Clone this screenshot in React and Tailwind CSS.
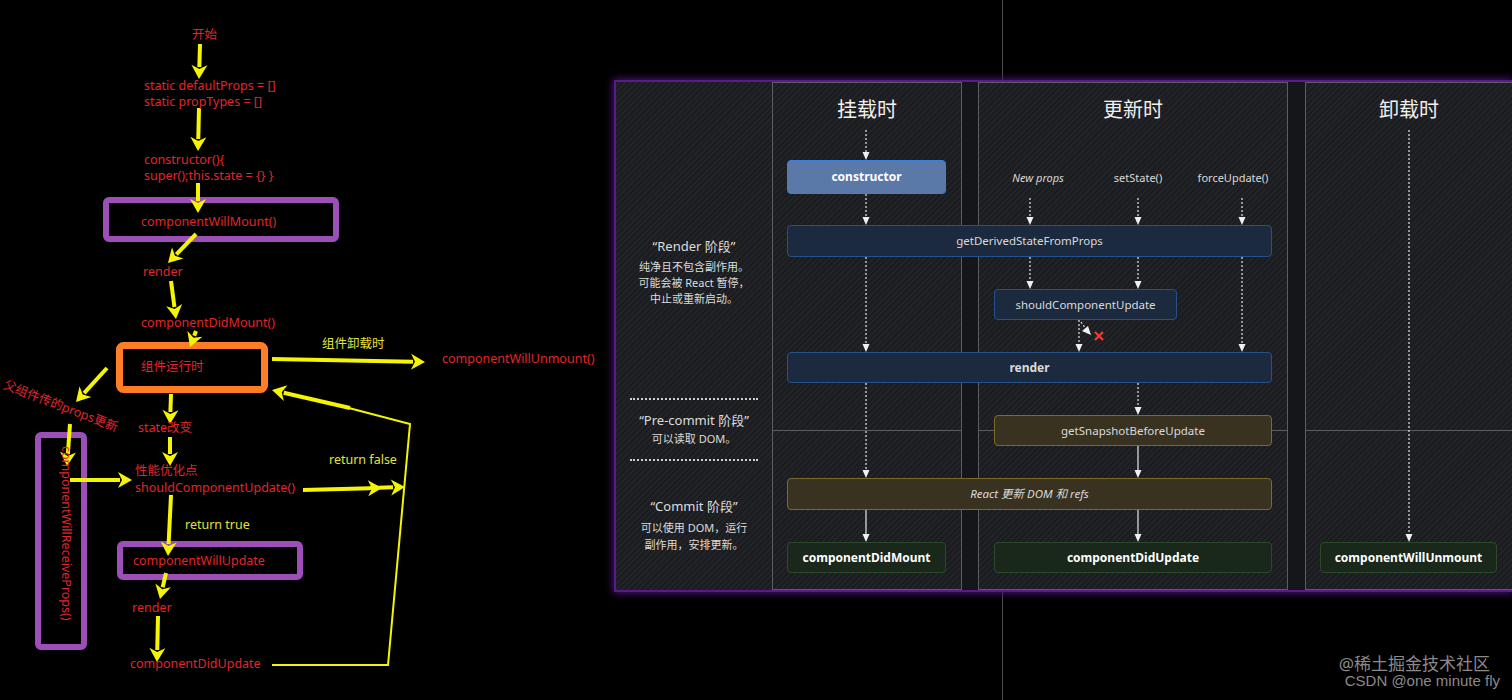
import React from "react";

const Y = "#f5f500";

function Arrow({ x1, y1, x2, y2, w = 4, h = 14, hw = 8, c = Y }) {
  const dx = x2 - x1, dy = y2 - y1;
  const L = Math.hypot(dx, dy);
  const ux = dx / L, uy = dy / L;
  const bx = x2 - ux * h, by = y2 - uy * h;
  const px = -uy, py = ux;
  return (
    <g>
      <line x1={x1} y1={y1} x2={bx + ux * 2} y2={by + uy * 2} stroke={c} strokeWidth={w} />
      <polygon
        points={`${x2},${y2} ${bx + px * hw},${by + py * hw} ${bx + ux * 4},${by + uy * 4} ${bx - px * hw},${by - py * hw}`}
        fill={c}
      />
    </g>
  );
}

const leftTexts = [
  { x: 192, y: 35, t: "开始" },
  { x: 144, y: 86, t: "static defaultProps = []" },
  { x: 144, y: 102, t: "static propTypes = []" },
  { x: 144, y: 160, t: "constructor(){" },
  { x: 144, y: 176, t: "super();this.state = {} }" },
  { x: 141, y: 222, t: "componentWillMount()" },
  { x: 143, y: 272, t: "render" },
  { x: 141, y: 323, t: "componentDidMount()" },
  { x: 141, y: 367, t: "组件运行时" },
  { x: 322, y: 344, t: "组件卸载时", y2: true },
  { x: 442, y: 359, t: "componentWillUnmount()" },
  { x: 138, y: 428, t: "state改变" },
  { x: 135, y: 471, t: "性能优化点" },
  { x: 135, y: 488, t: "shouldComponentUpdate()" },
  { x: 329, y: 460, t: "return false", y2: true },
  { x: 185, y: 525, t: "return true", y2: true },
  { x: 133, y: 561, t: "componentWillUpdate" },
  { x: 132, y: 608, t: "render" },
  { x: 130, y: 664, t: "componentDidUpdate" },
];

const arrows = [
  [200, 44, 199, 79],
  [199, 108, 198, 151],
  [198, 183, 198, 213],
  [196, 234, 168, 263],
  [171, 281, 176, 319],
  [196, 331, 190, 347],
  [272, 359, 425, 362],
  [107, 368, 76, 402],
  [171, 394, 170, 424],
  [170, 437, 170, 466],
  [70, 424, 67, 466],
  [70, 480, 132, 480],
  [303, 490, 382, 488],
  [370, 488, 405, 487],
  [171, 495, 168, 556],
  [166, 573, 160, 599],
  [158, 616, 157, 662],
  [350, 408, 272, 390],
];

function LeftDiagram() {
  return (
    <div className="relative w-[614px] h-[700px] shrink-0">
      <svg className="absolute inset-0" width="614" height="700">
        <rect x="106" y="200" width="230" height="39" rx="3" fill="none" stroke="#9d4fb8" strokeWidth="6" />
        <rect x="119.5" y="345.5" width="145" height="44" rx="4" fill="none" stroke="#ff7d24" strokeWidth="7" />
        <rect x="38" y="435" width="46" height="212" rx="3" fill="none" stroke="#9d4fb8" strokeWidth="6" />
        <rect x="120" y="544" width="180" height="33" rx="3" fill="none" stroke="#9d4fb8" strokeWidth="6" />
        <polyline points="272,665 388,665 410,424 345,407" fill="none" stroke={Y} strokeWidth="2" />
        {arrows.map((a, i) => (
          <Arrow key={i} x1={a[0]} y1={a[1]} x2={a[2]} y2={a[3]} />
        ))}
      </svg>
      {leftTexts.map((t, i) => (
        <span
          key={i}
          className={
            "absolute whitespace-nowrap text-[12.5px] leading-[16px] " +
            (t.y2 ? "text-[#e2e23c]" : "text-[#e0262b]")
          }
          style={{ left: t.x, top: t.y - 8 }}
        >
          {t.t}
        </span>
      ))}
      <span className="absolute left-[7px] top-[377px] whitespace-nowrap text-[12.5px] leading-[16px] text-[#e0262b] origin-top-left rotate-[21deg]">
        父组件传的props更新
      </span>
      <span className="absolute left-[58px] top-[446px] whitespace-nowrap text-[12.5px] leading-[16px] text-[#e0262b] [writing-mode:vertical-rl]">
        componentWillReceiveProps()
      </span>
    </div>
  );
}

function Box({ x, y, w, h, kind, bold, italic, children }) {
  const k = {
    mount: "bg-[#5a78a8] border-[#3b82e0] text-white",
    blue: "bg-[#1b2a3e] border-[#27518a] text-[#dadada]",
    olive: "bg-[#393220] border-[#7a6a2c] text-[#dadada]",
    green: "bg-[#1a271b] border-[#2b4a29] text-white",
  }[kind];
  return (
    <div
      className={
        "absolute flex items-center justify-center rounded-[4px] border " +
        k +
        (bold ? " font-bold text-[12px]" : " text-[11.5px]") +
        (italic ? " italic" : "")
      }
      style={{ left: x, top: y, width: w, height: h }}
    >
      {children}
    </div>
  );
}

function Panel() {
  const dashed = [
    [250, 48, 78],
    [250, 112, 143],
    [250, 175, 270],
    [250, 301, 396],
    [414, 116, 143],
    [414, 175, 207],
    [522, 116, 143],
    [522, 175, 207],
    [626, 116, 143],
    [626, 175, 270],
    [463, 238, 270],
    [522, 301, 333],
    [793, 48, 460],
  ];
  const solid = [
    [250, 428, 460],
    [522, 364, 396],
    [522, 428, 460],
  ];
  return (
    <div className="relative z-10 mt-[80px] h-[512px] flex-1 border-2 border-r-0 border-[#5a1a8c] shadow-[0_0_8px_1px_#4c1577] bg-[#1d1e21] bg-[repeating-linear-gradient(135deg,#1b1c1f_0px,#1b1c1f_2px,#222327_2px,#222327_4px)] flex">
      {/* phase labels */}
      <div className="w-[156px] shrink-0 flex flex-col items-center text-[#dcdcdc]">
        <div className="mt-[155px] text-[13px] leading-[18px]">“Render 阶段”</div>
        <div className="mt-[4px] text-[11px] leading-[16px] text-center">
          纯净且不包含副作用。
          <br />
          可能会被 React 暂停，
          <br />
          中止或重新启动。
        </div>
        <div className="mt-[91px] w-[128px] border-t-2 border-dotted border-[#cfcfcf]" />
        <div className="mt-[11px] text-[13px] leading-[18px]">“Pre-commit 阶段”</div>
        <div className="mt-[2px] text-[11px] leading-[16px]">可以读取 DOM。</div>
        <div className="mt-[12px] w-[128px] border-t-2 border-dotted border-[#cfcfcf]" />
        <div className="mt-[36px] text-[13px] leading-[18px]">“Commit 阶段”</div>
        <div className="mt-[4px] text-[11px] leading-[17px] text-center">
          可以使用 DOM，运行
          <br />
          副作用，安排更新。
        </div>
      </div>
      {/* mount column */}
      <div className="w-[190px] shrink-0 h-[508px] border border-[#5c5d60] flex flex-col">
        <div className="h-[348px] border-b border-[#5c5d60]">
          <div className="h-[54px] flex items-center justify-center text-[20px] text-[#f0f0f0]">挂载时</div>
        </div>
      </div>
      <div className="w-[16px] shrink-0 bg-[#151619]" />
      {/* update column */}
      <div className="w-[310px] shrink-0 h-[508px] border border-[#5c5d60] flex flex-col">
        <div className="h-[348px] border-b border-[#5c5d60]">
          <div className="h-[54px] flex items-center justify-center text-[20px] text-[#f0f0f0]">更新时</div>
        </div>
      </div>
      <div className="w-[17px] shrink-0 bg-[#151619]" />
      {/* unmount column */}
      <div className="flex-1 h-[508px] border border-r-0 border-[#5c5d60] flex flex-col">
        <div className="h-[348px] border-b border-[#5c5d60]">
          <div className="h-[54px] flex items-center justify-center text-[20px] text-[#f0f0f0]">卸载时</div>
        </div>
      </div>

      {/* diagram overlay */}
      <svg className="absolute inset-0 pointer-events-none" width="896" height="508">
        {dashed.map(([x, a, b], i) => (
          <g key={i}>
            <line x1={x} y1={a} x2={x} y2={b - 6} stroke="#e6e6e6" strokeWidth="1.2" strokeDasharray="2 2" />
            <polygon points={`${x},${b} ${x - 3.5},${b - 8} ${x + 3.5},${b - 8}`} fill="#f0f0f0" />
          </g>
        ))}
        {solid.map(([x, a, b], i) => (
          <g key={"s" + i}>
            <line x1={x} y1={a} x2={x} y2={b - 6} stroke="#e6e6e6" strokeWidth="1.2" />
            <polygon points={`${x},${b} ${x - 3.5},${b - 8} ${x + 3.5},${b - 8}`} fill="#f0f0f0" />
          </g>
        ))}
        <line x1="465" y1="240" x2="470" y2="247" stroke="#e6e6e6" strokeWidth="1.2" strokeDasharray="2 2" />
        <polygon points="475,253 466,249 472,244" fill="#f0f0f0" />
        <path d="M479 250 L487 258 M487 250 L479 258" stroke="#ff3b2b" strokeWidth="2" />
      </svg>
      <span className="absolute left-[422px] top-[88px] -translate-x-1/2 text-[11px] italic text-[#d8d8d8] whitespace-nowrap">New props</span>
      <span className="absolute left-[522px] top-[88px] -translate-x-1/2 text-[11px] text-[#d8d8d8] whitespace-nowrap">setState()</span>
      <span className="absolute left-[617px] top-[88px] -translate-x-1/2 text-[11px] text-[#d8d8d8] whitespace-nowrap">forceUpdate()</span>

      <Box x={171} y={78} w={159} h={34} kind="mount" bold>constructor</Box>
      <Box x={171} y={143} w={485} h={32} kind="blue">getDerivedStateFromProps</Box>
      <Box x={378} y={207} w={183} h={31} kind="blue">shouldComponentUpdate</Box>
      <Box x={171} y={270} w={485} h={31} kind="blue" bold>render</Box>
      <Box x={378} y={333} w={278} h={31} kind="olive">getSnapshotBeforeUpdate</Box>
      <Box x={171} y={396} w={485} h={32} kind="olive" italic>React 更新 DOM 和 refs</Box>
      <Box x={171} y={460} w={159} h={31} kind="green" bold>componentDidMount</Box>
      <Box x={378} y={460} w={278} h={31} kind="green" bold>componentDidUpdate</Box>
      <Box x={704} y={460} w={177} h={31} kind="green" bold>componentWillUnmount</Box>
    </div>
  );
}

export default function App() {
  return (
    <div className="relative w-[1512px] h-[700px] overflow-hidden bg-black flex font-['Noto_Sans','Noto_Sans_CJK_SC',sans-serif]">
      <div className="absolute left-[1002px] top-0 h-full w-px bg-[#4a4a4a]" />
      <LeftDiagram />
      <Panel />
      <div className="absolute right-[12px] top-[655px] z-20 flex flex-col items-end text-[#8a8a8a] leading-[17px]">
        <span className="text-[17px] mr-[10px]">@稀土掘金技术社区</span>
        <span className="text-[15px] font-['Liberation_Sans',sans-serif]">CSDN @one minute fly</span>
      </div>
    </div>
  );
}
